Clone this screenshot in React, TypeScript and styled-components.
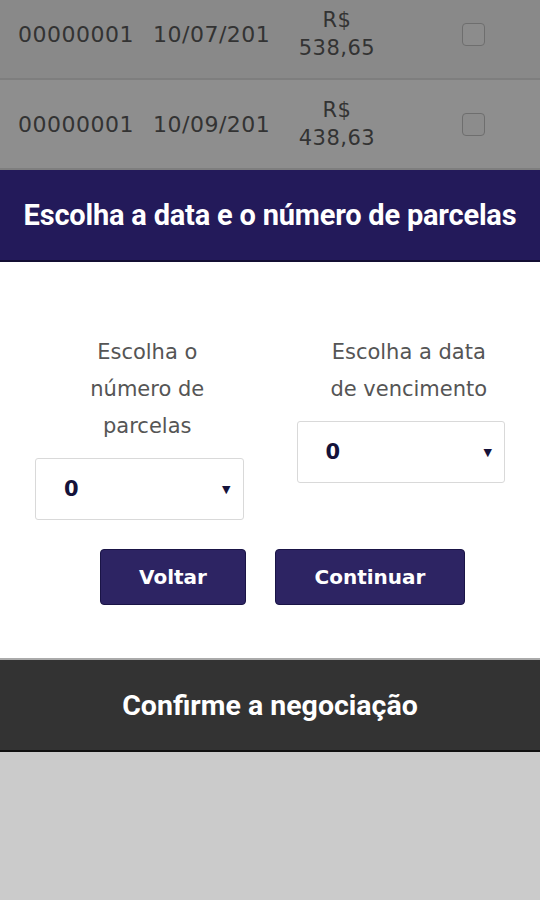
import styled, { createGlobalStyle } from "styled-components";

const rows = [
  { id: "00000001", date: "10/07/2018", value: "538,65" },
  { id: "00000001", date: "10/09/2018", value: "438,63" },
];

const fields = [
  ["Escolha o", "número de", "parcelas"],
  ["Escolha a data", "de vencimento"],
];

export default function App() {
  return (
    <Page>
      <GlobalStyle />
      <Table>
        {rows.map((row, i) => (
          <Row key={i} $tone={i === 0 ? "#898989" : "#8e8e8e"}>
            <IdCell>{row.id}</IdCell>
            <DateCell>{row.date}</DateCell>
            <Money>
              <span>R$</span>
              <span>{row.value}</span>
            </Money>
            <CheckCell>
              <Check />
            </CheckCell>
          </Row>
        ))}
      </Table>

      <Modal>
        <ModalHeader>Escolha a data e o número de parcelas</ModalHeader>
        <ModalBody>
          <Fields>
            {fields.map((lines, i) => (
              <Field key={i}>
                <Label>
                  {lines.map((line) => (
                    <span key={line}>{line}</span>
                  ))}
                </Label>
                <Select>
                  <span>0</span>
                  <Caret>▼</Caret>
                </Select>
              </Field>
            ))}
          </Fields>
          <Actions>
            <Button $width="146px">Voltar</Button>
            <Button $width="190px">Continuar</Button>
          </Actions>
        </ModalBody>
        <Footer>Confirme a negociação</Footer>
      </Modal>
    </Page>
  );
}

const GlobalStyle = createGlobalStyle`
  html, body {
    margin: 0;
    padding: 0;
    background: #cbcbcb;
  }
  * {
    box-sizing: border-box;
  }
`;

const Page = styled.div`
  width: 540px;
  height: 900px;
  background: #cbcbcb;
  overflow: hidden;
  font-family: "DejaVu Sans", Verdana, sans-serif;
`;

const Table = styled.div`
  display: flex;
  flex-direction: column;
  gap: 2px;
  margin-top: -10px;
  padding-bottom: 2px;
  background: #7e7e7e;
`;

const Row = styled.div<{ $tone: string }>`
  display: flex;
  align-items: center;
  height: 88px;
  padding-left: 18px;
  background: ${(p) => p.$tone};
  color: #333;
  font-size: 22px;
  letter-spacing: 0.5px;
`;

const IdCell = styled.div`
  width: 116px;
  white-space: nowrap;
`;

const DateCell = styled.div`
  width: 117px;
  margin-left: 19px;
  overflow: hidden;
  white-space: nowrap;
`;

const Money = styled.div`
  display: flex;
  flex-direction: column;
  align-items: center;
  width: 134px;
  font-size: 21px;
  line-height: 28px;
`;

const CheckCell = styled.div`
  display: flex;
  justify-content: center;
  width: 60px;
  margin-left: 39px;
`;

const Check = styled.div`
  width: 23px;
  height: 23px;
  border: 1px solid #6e6e6e;
  border-radius: 4px;
  background: #8c8c8c;
`;

const Modal = styled.div`
  display: flex;
  flex-direction: column;
`;

const ModalHeader = styled.div`
  display: flex;
  align-items: center;
  justify-content: center;
  height: 92px;
  background: #231a5a;
  border-bottom: 2px solid #130e33;
  color: #fff;
  font-family: Roboto, "Liberation Sans", sans-serif;
  font-weight: 700;
  font-size: 29px;
  letter-spacing: -0.2px;
`;

const ModalBody = styled.div`
  display: flex;
  flex-direction: column;
  align-items: center;
  height: 396px;
  padding: 72px 35px 0;
  background: #fff;
`;

const Fields = styled.div`
  display: flex;
  align-items: flex-start;
  gap: 53px;
  width: 100%;
`;

const Field = styled.div`
  display: flex;
  flex: 1;
  flex-direction: column;
`;

const Label = styled.div`
  display: flex;
  flex-direction: column;
  align-items: center;
  padding-left: 16px;
  margin-bottom: 13px;
  color: #555;
  font-size: 21px;
  line-height: 37px;
  white-space: nowrap;
`;

const Select = styled.div`
  display: flex;
  align-items: center;
  justify-content: space-between;
  height: 62px;
  padding: 0 12px 0 28px;
  border: 1px solid #d9d9d9;
  border-radius: 3px;
  color: #14123a;
  font-size: 21px;
  font-weight: 700;
`;

const Caret = styled.span`
  font-size: 11px;
`;

const Actions = styled.div`
  display: flex;
  gap: 29px;
  margin-top: 29px;
  padding-left: 25px;
`;

const Button = styled.button<{ $width: string }>`
  width: ${(p) => p.$width};
  height: 56px;
  border: 1px solid #1a1446;
  border-radius: 4px;
  background: #2d2463;
  color: #fff;
  font-family: "DejaVu Sans", Verdana, sans-serif;
  font-size: 20px;
  font-weight: 700;
`;

const Footer = styled.div`
  display: flex;
  align-items: center;
  justify-content: center;
  height: 94px;
  background: #333;
  border-top: 2px solid #aaa;
  border-bottom: 2px solid #111;
  color: #fff;
  font-family: Roboto, "Liberation Sans", sans-serif;
  font-weight: 700;
  font-size: 28.5px;
`;
